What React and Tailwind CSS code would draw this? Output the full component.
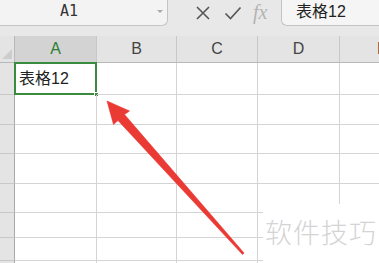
import React from "react";

const cols = [
  { l: "A", w: "w-[82px]" },
  { l: "B", w: "w-[80px]" },
  { l: "C", w: "w-[81px]" },
  { l: "D", w: "w-[82px]" },
];
const rowH = ["h-[32px]", "h-[30px]", "h-[29px]", "h-[30px]", "h-[29px]", "h-[25px]", "h-[23px]", "h-[30px]"];

export default function App() {
  return (
    <div className="relative w-[379px] h-[263px] overflow-hidden bg-white" style={{ fontFamily: '"Liberation Sans", "Noto Sans CJK SC", sans-serif' }}>
      {/* formula bar */}
      <div className="h-[36px] bg-[#e8e8e8] flex items-start">
        <div className="relative shrink-0 w-[168px] h-[26px] bg-[#f3f3f3] border-r border-b border-[#c4c4c4] rounded-br-[6px] flex items-center pl-[60px]">
          <span className="text-[15px] text-[#333] pb-[2px]" style={{ fontFamily: '"DejaVu Sans Mono", monospace' }}>A1</span>
          <span className="absolute right-[4px] top-[10px] w-0 h-0 border-l-[3px] border-r-[3px] border-t-[3px] border-l-transparent border-r-transparent border-t-[#aaa]"></span>
        </div>
        <div className="shrink-0 w-[113px] h-[26px] flex items-center">
          <svg width="16" height="16" viewBox="0 0 16 16" className="ml-[27px]">
            <path d="M2 2L14 14M14 2L2 14" stroke="#555" strokeWidth="1.6" fill="none" />
          </svg>
          <svg width="18" height="16" viewBox="0 0 18 16" className="ml-[13px]">
            <path d="M1.5 8.5L6.5 13.5L16.5 2.5" stroke="#555" strokeWidth="1.6" fill="none" />
          </svg>
          <span className="ml-[11px] text-[20px] italic text-[#b4b4b4] leading-none pb-[3px]" style={{ fontFamily: '"Liberation Serif", serif' }}>fx</span>
        </div>
        <div className="flex-1 h-[26px] bg-[#f5f5f5] border-l border-b border-[#c4c4c4] rounded-bl-[6px] flex items-center pl-[14px]">
          <span className="text-[16px] text-[#222] pb-[2px]">表格12</span>
        </div>
      </div>

      {/* column header row */}
      <div className="h-[27px] flex bg-[#e4e4e4] border-b border-[#b8b8b8]">
        <div className="relative shrink-0 w-[15px] border-r border-[#b8b8b8]">
          <div className="absolute left-[2px] bottom-[3px] w-0 h-0 border-b-[10px] border-l-[10px] border-b-[#cdcdcd] border-l-transparent"></div>
        </div>
        {cols.map((c, i) => (
          <div key={c.l} className={`${c.w} shrink-0 border-r border-[#c8c8c8] flex items-center justify-center text-[16px] ${i === 0 ? "bg-[#d3d3d3] text-[#2e7d32]" : "text-[#444]"}`}>
            {c.l}
          </div>
        ))}
        <div className="w-[80px] shrink-0 flex items-center pl-[37px] text-[16px] text-[#444]">E</div>
      </div>

      {/* grid rows */}
      {rowH.map((h, r) => (
        <div key={r} className={`${h} flex`}>
          <div className="shrink-0 w-[15px] bg-[#e4e4e4] border-r border-b border-r-[#a8a8a8] border-b-[#c8c8c8]"></div>
          {cols.map((c, i) => (
            <div key={c.l} className={`${c.w} shrink-0 border-r border-b border-[#d4d4d4] relative`}>
              {r === 0 && i === 0 && (
                <div className="absolute left-[-1px] top-[-1px] w-[83px] h-[33px] border-2 border-[#3a8a3f] flex items-center pl-[3px]">
                  <span className="text-[16px] text-[#222]">表格12</span>
                  <div className="absolute right-[-4px] bottom-[-4px] w-[5px] h-[5px] bg-[#3a8a3f] border border-white"></div>
                </div>
              )}
            </div>
          ))}
          <div className="w-[80px] shrink-0 border-b border-[#d4d4d4]"></div>
        </div>
      ))}

      {/* watermark */}
      <div className="absolute left-[263px] top-[204px] w-[116px] h-[59px] bg-white flex items-center justify-center pb-[2px]">
        <span className="text-[27px] text-[#d4d4d4] tracking-[1px]" style={{ fontFamily: '"Noto Sans CJK SC", sans-serif', fontWeight: 300 }}>软件技巧</span>
      </div>

      {/* arrow */}
      <svg className="absolute left-0 top-0" width="379" height="263" viewBox="0 0 379 263">
        <polygon points="107,101 113.5,124.5 118,120.5 242.5,254.5 244,253 124.5,114.5 129.5,111" fill="#ea3a34" stroke="#e33" strokeWidth="0.6" strokeLinejoin="round" />
      </svg>
    </div>
  );
}
